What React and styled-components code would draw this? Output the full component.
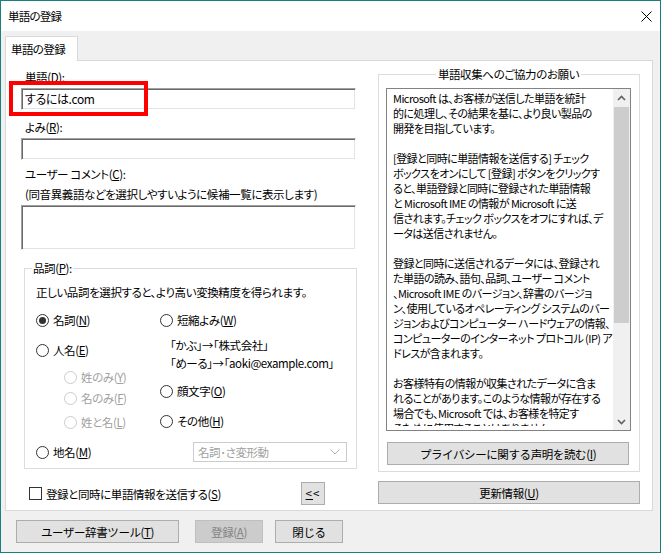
import styled, { createGlobalStyle } from "styled-components"

const GlobalStyle = createGlobalStyle`
    body {
        margin: 0;
        background: #ffffff;
        font-family: "Noto Sans CJK JP", "Noto Sans", sans-serif;
        font-size: 11.5px;
        color: #000000;
    }
    u {
        text-underline-offset: 1px;
    }
`

const infoLines = [
    "Microsoft は、お客様が送信した単語を統計",
    "的に処理し、その結果を基に、より良い製品の",
    "開発を目指しています。",
    "",
    "[登録と同時に単語情報を送信する] チェック",
    "ボックスをオンにして [登録] ボタンをクリックす",
    "ると、単語登録と同時に登録された単語情報",
    "と Microsoft IME の情報が Microsoft に送",
    "信されます。チェック ボックスをオフにすれば、デ",
    "ータは送信されません。",
    "",
    "登録と同時に送信されるデータには、登録され",
    "た単語の読み、語句、品詞、ユーザー コメント",
    "、Microsoft IME のバージョン、辞書のバージョ",
    "ン、使用しているオペレーティング システムのバー",
    "ジョンおよびコンピューター ハードウェアの情報、",
    "コンピューターのインターネット プロトコル (IP) ア",
    "ドレスが含まれます。",
    "",
    "お客様特有の情報が収集されたデータに含ま",
    "れることがあります。このような情報が存在する",
    "場合でも、Microsoft では、お客様を特定す",
    "るために使用することはありません。",
]

const Radio = ({ label, checked, disabled, top, indent }) => (
    <RadioRow $top={top} $indent={indent} $disabled={disabled}>
        <RadioCircle $checked={checked} $disabled={disabled} />
        <span>{label}</span>
    </RadioRow>
)

const App = () => {
    return (
        <>
            <GlobalStyle />
            <Window>
                <TitleBar>
                    <span>単語の登録</span>
                    <CloseButton>
                        <svg width="11" height="11" viewBox="0 0 11 11">
                            <path d="M0.5 0.5 L10.5 10.5 M10.5 0.5 L0.5 10.5" stroke="#000" strokeWidth="1" fill="none" />
                        </svg>
                    </CloseButton>
                </TitleBar>
                <Body>
                    <TabStrip>
                        <Tab>単語の登録</Tab>
                    </TabStrip>
                    <Panel>
                        <LeftColumn>
                            <FieldLabel>単語(<u>D</u>):</FieldLabel>
                            <InputWrap $top={3}>
                                <TextBox $height={22}>するには.com</TextBox>
                                <Highlight />
                            </InputWrap>
                            <FieldLabel $top={9}>よみ(<u>R</u>):</FieldLabel>
                            <InputWrap $top={3}>
                                <TextBox $height={22} />
                            </InputWrap>
                            <FieldLabel $top={6}>ユーザー コメント(<u>C</u>):</FieldLabel>
                            <FieldLabel $top={4}>(同音異義語などを選択しやすいように候補一覧に表示します)</FieldLabel>
                            <InputWrap $top={3}>
                                <TextBox $height={45} />
                            </InputWrap>
                            <PosGroup>
                                <PosLegend>品詞(<u>P</u>):</PosLegend>
                                <Hint>正しい品詞を選択すると、より高い変換精度を得られます。</Hint>
                                <RadioColumns>
                                    <RadioStack>
                                        <Radio label={<>名詞(<u>N</u>)</>} checked top={0} />
                                        <Radio label={<>人名(<u>E</u>)</>} top={14} />
                                        <Radio label={<>姓のみ(<u>Y</u>)</>} disabled top={11} indent={28} />
                                        <Radio label={<>名のみ(<u>F</u>)</>} disabled top={5} indent={28} />
                                        <Radio label={<>姓と名(<u>L</u>)</>} disabled top={8} indent={28} />
                                    </RadioStack>
                                    <RadioStack>
                                        <Radio label={<>短縮よみ(<u>W</u>)</>} top={0} />
                                        <Example $top={9}>「かぶ」→「株式会社」</Example>
                                        <Example $top={2}>「めーる」→「aoki@example.com」</Example>
                                        <Radio label={<>顔文字(<u>O</u>)</>} top={12} />
                                        <Radio label={<>その他(<u>H</u>)</>} top={14} />
                                    </RadioStack>
                                </RadioColumns>
                                <PosBottomRow>
                                    <Radio label={<>地名(<u>M</u>)</>} />
                                    <Combo>
                                        名詞･さ変形動
                                        <svg width="10" height="6" viewBox="0 0 10 6">
                                            <path d="M0.5 0.5 L5 5 L9.5 0.5" stroke="#b4b4b4" strokeWidth="1" fill="none" />
                                        </svg>
                                    </Combo>
                                </PosBottomRow>
                            </PosGroup>
                        </LeftColumn>

                        <InfoGroup>
                            <InfoLegend>単語収集へのご協力のお願い</InfoLegend>
                            <InfoBox>
                                <InfoText>
                                    {infoLines.map((line, i) => (
                                        <InfoLine key={i}>{line}</InfoLine>
                                    ))}
                                </InfoText>
                                <ScrollBar>
                                    <ScrollArrow>
                                        <svg width="9" height="6" viewBox="0 0 9 6">
                                            <path d="M1 5 L4.5 1.5 L8 5" stroke="#606060" strokeWidth="1.6" fill="none" />
                                        </svg>
                                    </ScrollArrow>
                                    <ScrollTrack>
                                        <ScrollThumb />
                                    </ScrollTrack>
                                    <ScrollArrow>
                                        <svg width="9" height="6" viewBox="0 0 9 6">
                                            <path d="M1 1 L4.5 4.5 L8 1" stroke="#606060" strokeWidth="1.6" fill="none" />
                                        </svg>
                                    </ScrollArrow>
                                </ScrollBar>
                            </InfoBox>
                            <PrivacyButton>プライバシーに関する声明を読む(<u>I</u>)</PrivacyButton>
                        </InfoGroup>

                        <LeftFooter>
                            <CheckRow>
                                <CheckBox />
                                <span>登録と同時に単語情報を送信する(<u>S</u>)</span>
                            </CheckRow>
                            <CollapseButton><u>&lt;</u>&lt;</CollapseButton>
                        </LeftFooter>
                        <Button $width={262}>更新情報(<u>U</u>)</Button>
                    </Panel>

                    <ButtonBar>
                        <Button $width={163}>ユーザー辞書ツール(<u>T</u>)</Button>
                        <Button $width={68} $left={16} disabled>登録(<u>A</u>)</Button>
                        <Button $width={68} $left={12}>閉じる</Button>
                    </ButtonBar>
                </Body>
            </Window>
        </>
    )
}

const Window = styled.div`
    width: 661px;
    height: 553px;
    box-sizing: border-box;
    border: 1px solid #1b7f7f;
    background: #f0f0f0;
    display: flex;
    flex-direction: column;
    font-feature-settings: "palt";
    letter-spacing: -0.4px;
`

const TitleBar = styled.div`
    height: 30px;
    flex-shrink: 0;
    background: #ffffff;
    display: flex;
    align-items: center;
    justify-content: space-between;
    padding-left: 7px;
    letter-spacing: -0.8px;
`

const CloseButton = styled.div`
    width: 28px;
    height: 30px;
    display: flex;
    align-items: center;
    justify-content: center;
`

const Body = styled.div`
    flex: 1;
    padding: 5px 7px 0 4px;
    display: flex;
    flex-direction: column;
`

const TabStrip = styled.div`
    display: flex;
`

const Tab = styled.div`
    position: relative;
    z-index: 1;
    height: 24px;
    width: 66px;
    padding-left: 5px;
    box-sizing: content-box;
    margin-bottom: -1px;
    background: #ffffff;
    border: 1px solid #d9d9d9;
    border-bottom: none;
    display: flex;
    align-items: center;
    letter-spacing: -0.6px;
`

const Panel = styled.div`
    height: 451px;
    box-sizing: border-box;
    background: #ffffff;
    border: 1px solid #d9d9d9;
    padding: 5px 12px 5px 15px;
    display: grid;
    grid-template-columns: 336px 262px;
    grid-template-rows: 1fr 24px;
    column-gap: 21px;
    row-gap: 9px;
`

const LeftColumn = styled.div`
    display: flex;
    flex-direction: column;
    padding-top: 3px;
`

const FieldLabel = styled.div`
    line-height: 16px;
    height: 16px;
    margin-top: ${p => p.$top || 0}px;
    padding-left: 4px;
    white-space: nowrap;
`

const InputWrap = styled.div`
    position: relative;
    margin-top: ${p => p.$top || 0}px;
`

const TextBox = styled.div`
    width: 335px;
    height: ${p => p.$height}px;
    box-sizing: border-box;
    border: 1px solid;
    border-color: #a0a0a0 #ffffff #ffffff #a0a0a0;
    box-shadow: inset 1px 1px 0 #696969, inset -1px -1px 0 #e3e3e3;
    background: #ffffff;
    padding: 2px 3px;
    line-height: 16px;
    font-size: 12px;
`

const Highlight = styled.div`
    position: absolute;
    left: -12px;
    top: -7px;
    width: 139px;
    height: 35px;
    box-sizing: border-box;
    border: 4px solid #ff0000;
`

const PosGroup = styled.fieldset`
    margin: 10px 0 0 3px;
    width: 333px;
    box-sizing: border-box;
    border: 1px solid #dcdcdc;
    padding: 8px 10px 6px 11px;
    min-width: 0;
`

const PosLegend = styled.legend`
    line-height: 16px;
    padding: 0 1px;
    margin-left: -4px;
`

const Hint = styled.div`
    line-height: 16px;
    white-space: nowrap;
`

const RadioColumns = styled.div`
    display: grid;
    grid-template-columns: 124px 1fr;
    margin-top: 12px;
`

const RadioStack = styled.div`
    display: flex;
    flex-direction: column;
`

const RadioRow = styled.label`
    display: flex;
    align-items: center;
    gap: 4px;
    height: 16px;
    margin-top: ${p => p.$top || 0}px;
    margin-left: ${p => p.$indent || 0}px;
    color: ${p => (p.$disabled ? "#a0a0a0" : "#000000")};
    white-space: nowrap;
`

const RadioCircle = styled.span`
    width: 13px;
    height: 13px;
    flex-shrink: 0;
    box-sizing: border-box;
    border-radius: 50%;
    border: 1px solid ${p => (p.$disabled ? "#cccccc" : "#333333")};
    background: #ffffff;
    display: flex;
    align-items: center;
    justify-content: center;

    &::after {
        content: "";
        display: ${p => (p.$checked ? "block" : "none")};
        width: 7px;
        height: 7px;
        border-radius: 50%;
        background: #333333;
    }
`

const Example = styled.div`
    line-height: 16px;
    margin-top: ${p => p.$top || 0}px;
    margin-left: 10px;
    white-space: nowrap;
`

const PosBottomRow = styled.div`
    display: flex;
    align-items: center;
    justify-content: space-between;
    margin-top: 12px;
`

const Combo = styled.div`
    width: 154px;
    height: 20px;
    box-sizing: border-box;
    border: 1px solid #cccccc;
    background: #ffffff;
    color: #a0a0a0;
    padding: 0 6px 0 4px;
    display: flex;
    align-items: center;
    justify-content: space-between;
    margin-right: -1px;
`

const InfoGroup = styled.fieldset`
    margin: 0;
    align-self: start;
    border: 1px solid #dcdcdc;
    padding: 6px 8px 6px 7px;
    min-width: 0;
    display: flex;
    flex-direction: column;
`

const InfoLegend = styled.legend`
    line-height: 16px;
    padding: 0 2px;
    margin: 0 auto;
`

const InfoBox = styled.div`
    height: 343px;
    box-sizing: border-box;
    border: 1px solid #828282;
    display: flex;
    overflow: hidden;
`

const InfoText = styled.div`
    flex: 1;
    padding: 2px 0 0 6px;
    margin-bottom: 4px;
    overflow: hidden;
    font-size: 11px;
    line-height: 15px;
    letter-spacing: -0.55px;
`

const InfoLine = styled.div`
    height: 15px;
    white-space: nowrap;
`

const ScrollBar = styled.div`
    width: 17px;
    flex-shrink: 0;
    background: #f0f0f0;
    display: flex;
    flex-direction: column;
`

const ScrollArrow = styled.div`
    height: 17px;
    display: flex;
    align-items: center;
    justify-content: center;
`

const ScrollTrack = styled.div`
    flex: 1;
    padding: 1px 1px 0;
`

const ScrollThumb = styled.div`
    height: 216px;
    background: #cdcdcd;
`

const Button = styled.button`
    width: ${p => p.$width}px;
    height: ${p => p.$height || 23}px;
    margin-left: ${p => p.$left || 0}px;
    box-sizing: border-box;
    border: 1px solid ${p => (p.disabled ? "#bfbfbf" : "#adadad")};
    background: ${p => (p.disabled ? "#cccccc" : "#e1e1e1")};
    color: ${p => (p.disabled ? "#838383" : "#000000")};
    font-family: inherit;
    font-size: 11.5px;
    letter-spacing: inherit;
    padding: 0;
    display: flex;
    align-items: center;
    justify-content: center;
`

const PrivacyButton = styled(Button)`
    width: auto;
    margin: 11px 2px 0 1px;
`

const LeftFooter = styled.div`
    display: flex;
    align-items: center;
    padding-right: 32px;
`

const CheckRow = styled.label`
    display: flex;
    align-items: center;
    gap: 4px;
    margin-left: 8px;
    margin-top: 1px;
    white-space: nowrap;
`

const CheckBox = styled.span`
    width: 13px;
    height: 13px;
    box-sizing: border-box;
    border: 1px solid #333333;
    background: #ffffff;
`

const CollapseButton = styled(Button)`
    width: 24px;
    margin-left: auto;
    letter-spacing: 1px;
`

const ButtonBar = styled.div`
    display: flex;
    margin: 9px 0 0 11px;
`

export default App
